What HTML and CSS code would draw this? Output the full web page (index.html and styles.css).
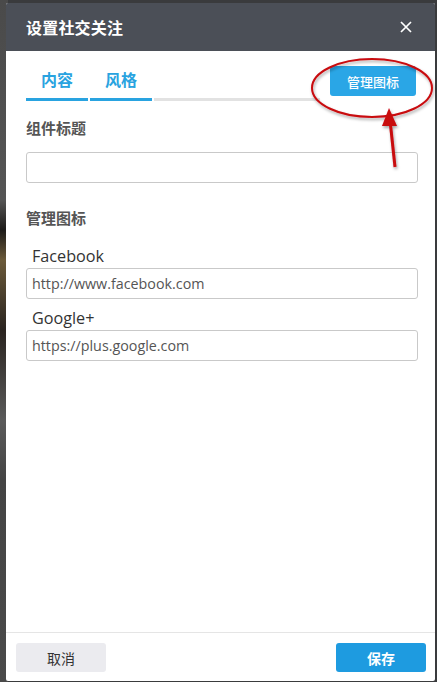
FILE: index.html
```html
<!DOCTYPE html>
<html lang="zh">
<head>
<meta charset="utf-8">
<link rel="stylesheet" href="styles.css">
</head>
<body>
<div class="backdrop"></div>
<div class="dialog">
  <div class="header">
    <span class="title">设置社交关注</span>
    <span class="close">
      <svg width="14" height="14" viewBox="0 0 14 14"><path d="M2 2L12 12M12 2L2 12" stroke="#fff" stroke-width="1.7" fill="none"/></svg>
    </span>
  </div>
  <div class="body">
    <div class="tabrow">
      <div class="tabs">
        <div class="tab active">内容</div>
        <div class="tab active">风格</div>
        <div class="tabline"></div>
      </div>
      <button class="manage">管理图标</button>
    </div>
    <div class="label strong first">组件标题</div>
    <div class="input"></div>
    <div class="label strong section">管理图标</div>
    <div class="label site">Facebook</div>
    <div class="input small">http://www.facebook.com</div>
    <div class="label site second">Google+</div>
    <div class="input small">https://plus.google.com</div>
  </div>
  <div class="footer">
    <button class="btn cancel">取消</button>
    <button class="btn save">保存</button>
  </div>
</div>
<svg class="annot" width="437" height="200" viewBox="0 0 437 200">
  <defs>
    <filter id="sh" x="-20%" y="-20%" width="140%" height="140%">
      <feDropShadow dx="1" dy="2" stdDeviation="1.5" flood-color="#000" flood-opacity="0.35"/>
    </filter>
  </defs>
  <g filter="url(#sh)">
    <ellipse cx="372" cy="88" rx="60" ry="29" fill="none" stroke="#c8080e" stroke-width="2"/>
    <path d="M395 167 L390 120" stroke="#c8080e" stroke-width="3" fill="none"/>
    <path d="M389 108 L397 126 L382 126 Z" fill="#c8080e"/>
  </g>
</svg>
</body>
</html>
```
FILE: styles.css
```css
html, body {
  margin: 0;
  padding: 0;
}
body {
  width: 437px;
  height: 682px;
  background: #3a3b3d;
  position: relative;
  overflow: hidden;
  font-family: "Noto Sans CJK SC", "Open Sans", sans-serif;
}
.backdrop {
  position: absolute;
  left: 0;
  top: 0;
  width: 8px;
  height: 682px;
  background: linear-gradient(180deg, #4a4a4a 0px, #555 200px, #1c1a18 230px, #6b5a3a 260px, #2a2420 330px, #5a5a5a 420px, #444 480px, #4a4a4a 682px);
}
.dialog {
  position: absolute;
  left: 6px;
  top: 3px;
  width: 429px;
  height: 678px;
  background: #fff;
  display: flex;
  flex-direction: column;
  border-radius: 2px;
  overflow: hidden;
}
.header {
  height: 48px;
  background: #4b4f57;
  display: flex;
  align-items: center;
  justify-content: space-between;
  padding: 0 22px 0 20px;
  flex: none;
}
.title {
  color: #fff;
  font-size: 16px;
  font-weight: 700;
  letter-spacing: 0.2px;
}
.close {
  display: flex;
  width: 14px;
  height: 14px;
}
.body {
  flex: 1;
  padding: 0 17px 0 20px;
}
.tabrow {
  display: flex;
  align-items: flex-start;
  margin-top: 14px;
}
.tabs {
  flex: 1;
  display: flex;
  align-items: flex-end;
  height: 36px;
}
.tab {
  width: 62px;
  height: 33px;
  border-bottom: 3px solid #29a3e0;
  color: #29a3e0;
  font-size: 16px;
  text-align: center;
  line-height: 28px;
  margin-right: 2px;
  box-sizing: content-box;
  font-weight: 700;
}
.tabline {
  width: 166px;
  height: 3px;
  background: #e2e2e2;
}
.manage {
  margin-top: 1px;
  width: 86px;
  height: 30px;
  border: none;
  border-radius: 3px;
  background: #2aa6e6;
  color: #fff;
  font-family: inherit;
  font-size: 13px;
  font-weight: 500;
  padding: 0;
  margin-left: 10px;
  margin-right: 2px;
}
.label {
  height: 20px;
  line-height: 20px;
}
.strong {
  color: #555;
  font-size: 15px;
  font-weight: 700;
}
.first {
  margin-top: 17px;
}
.section {
  margin-top: 25px;
}
.site {
  color: #333;
  font-family: "Open Sans", sans-serif;
  font-size: 16.2px;
  padding-left: 6px;
  margin-top: 18px;
}
.site.second {
  margin-top: 9px;
}
.input {
  margin-top: 14px;
  height: 31px;
  box-sizing: border-box;
  border: 1px solid #c9c9c9;
  border-radius: 3px;
}
.input.small {
  margin-top: 2px;
  font-family: "Open Sans", sans-serif;
  font-size: 14.3px;
  color: #555;
  line-height: 29px;
  padding-left: 5px;
}
.footer {
  flex: none;
  border-top: 1px solid #e5e5e5;
  padding: 10px 9px 9px 10px;
  display: flex;
  justify-content: space-between;
}
.btn {
  width: 90px;
  height: 29px;
  border: none;
  border-radius: 3px;
  font-family: inherit;
  font-size: 14px;
  padding: 0;
}
.cancel {
  background: #ebebef;
  color: #333;
}
.save {
  background: #1e9be0;
  color: #fff;
  font-weight: 700;
}
.annot {
  position: absolute;
  left: 0;
  top: 0;
  pointer-events: none;
}
```
